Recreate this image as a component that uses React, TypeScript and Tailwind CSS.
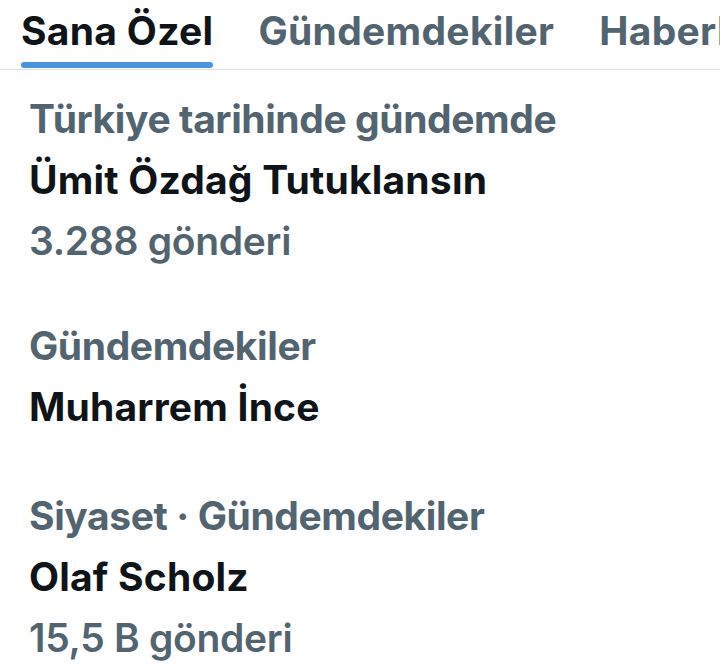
import React from 'react';

const tabs = ['Sana Özel', 'Gündemdekiler', 'Haberler'];

const trends = [
  { category: 'Türkiye tarihinde gündemde', title: 'Ümit Özdağ Tutuklansın', count: '3.288 gönderi', pad: 'pt-[18px]' },
  { category: 'Gündemdekiler', title: 'Muharrem İnce', count: null, pad: 'pt-[44px]' },
  { category: 'Siyaset · Gündemdekiler', title: 'Olaf Scholz', count: '15,5 B gönderi', pad: 'pt-[48px]' },
];

const App = () => {
  return (
    <div className="w-[720px] h-[668px] overflow-hidden bg-white font-['Inter',sans-serif]">
      <div className="h-[70px] border-b border-[#dcdfe2] flex gap-[45px] pl-[21px] whitespace-nowrap overflow-hidden">
        {tabs.map((tab, i) => (
          <div key={tab} className="flex flex-col shrink-0">
            <span
              className={`text-[39px] leading-[62px] font-bold tracking-[0.3px] ${i === 0 ? 'text-[#0f1419]' : 'text-[#536471]'}`}
            >
              {tab}
            </span>
            {i === 0 && <div className="h-[6px] rounded-full bg-[#4a94de]" />}
          </div>
        ))}
      </div>

      <div className="pl-[29px]">
        {trends.map((t) => (
          <div key={t.title} className={`${t.pad} flex flex-col whitespace-nowrap`}>
            <span className="text-[39px] leading-[61px] font-bold text-[#536471] tracking-[-0.4px]">{t.category}</span>
            <span className="text-[39px] leading-[61px] font-bold text-[#0f1419] tracking-[0.2px]">{t.title}</span>
            {t.count && (
              <span className="text-[39px] leading-[61px] font-semibold text-[#536471] tracking-[-0.3px]">{t.count}</span>
            )}
          </div>
        ))}
      </div>
    </div>
  );
};

export default App;
